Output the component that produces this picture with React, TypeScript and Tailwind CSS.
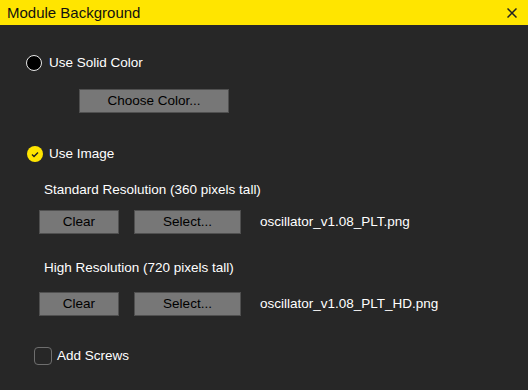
import React from "react";

const font = { fontFamily: '"Liberation Sans", Arial, sans-serif' };

function Btn({ label, w }: { label: string; w: string }) {
  return (
    <div
      className={`${w} h-[24px] flex items-center justify-center bg-[#777777] border border-[#505050] text-[#1a1a1a]`}
    >
      <span className="text-[13.5px] text-black">{label}</span>
    </div>
  );
}

export default function App() {
  return (
    <div style={font} className="w-[528px] h-[390px] bg-[#272727] flex flex-col overflow-hidden">
      <div className="h-[25px] bg-[#ffe500] flex items-center justify-between pl-[7px] pr-[11px]">
        <span className="text-[15px] text-[#111] leading-none">Module Background</span>
        <svg width="10" height="10" viewBox="0 0 10 10">
          <path d="M0.5 0.5 L9.5 9.5 M9.5 0.5 L0.5 9.5" stroke="#222" strokeWidth="1.5" />
        </svg>
      </div>

      <div className="flex flex-col text-[13.5px]">
        <div className="mt-[30px] ml-[26px] h-[16px] flex items-center gap-[7px] text-white">
          <div className="w-[16px] h-[16px] rounded-full bg-black border-[1.5px] border-[#e8e8e8]" />
          <span className="leading-none">Use Solid Color</span>
        </div>

        <div className="mt-[18px] ml-[79px]">
          <Btn label="Choose Color..." w="w-[150px]" />
        </div>

        <div className="mt-[33px] ml-[27px] h-[16px] flex items-center gap-[6px] text-white">
          <div className="w-[16px] h-[16px] rounded-full bg-[#ffe500] flex items-center justify-center">
            <svg width="8" height="7" viewBox="0 0 8 7">
              <path d="M1 3.6 L3 5.6 L7 1.4" stroke="#222" strokeWidth="1.4" fill="none" />
            </svg>
          </div>
          <span className="leading-none">Use Image</span>
        </div>

        <div className="mt-[20px] ml-[44px] h-[16px] flex items-center text-white">Standard Resolution (360 pixels tall)</div>

        <div className="mt-[12px] ml-[39px] flex items-center">
          <Btn label="Clear" w="w-[80px]" />
          <div className="ml-[15px]">
            <Btn label="Select..." w="w-[107px]" />
          </div>
          <span className="ml-[19px] text-white">oscillator_v1.08_PLT.png</span>
        </div>

        <div className="mt-[26px] ml-[44px] h-[16px] flex items-center text-white">High Resolution (720 pixels tall)</div>

        <div className="mt-[16px] ml-[39px] flex items-center">
          <Btn label="Clear" w="w-[80px]" />
          <div className="ml-[15px]">
            <Btn label="Select..." w="w-[107px]" />
          </div>
          <span className="ml-[19px] text-white">oscillator_v1.08_PLT_HD.png</span>
        </div>

        <div className="mt-[31px] ml-[34px] h-[18px] flex items-center gap-[5px] text-white">
          <div className="w-[18px] h-[18px] rounded-[4px] border-[1.5px] border-[#6e6e6e]" />
          <span className="leading-none">Add Screws</span>
        </div>
      </div>
    </div>
  );
}
